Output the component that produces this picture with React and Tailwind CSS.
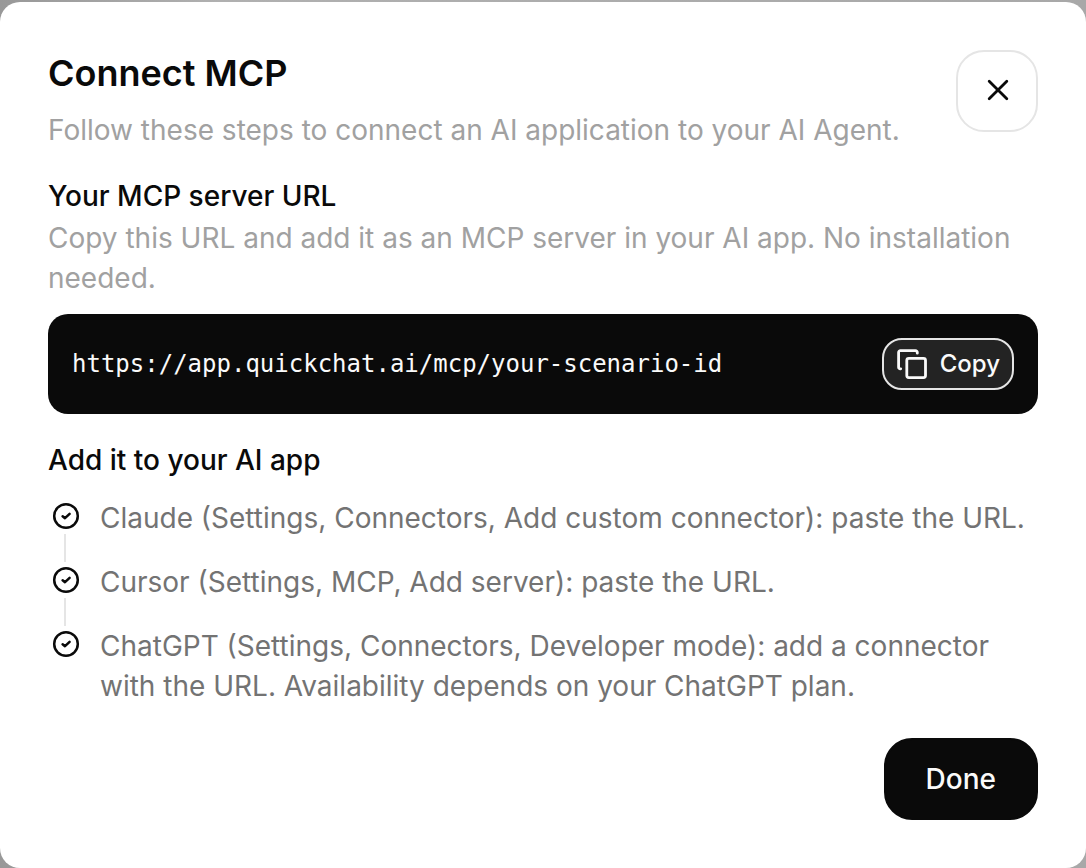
import React, { useState } from 'react';

const SERVER_URL = 'https://app.quickchat.ai/mcp/your-scenario-id';

const steps = [
  'Claude (Settings, Connectors, Add custom connector): paste the URL.',
  'Cursor (Settings, MCP, Add server): paste the URL.',
  'ChatGPT (Settings, Connectors, Developer mode): add a connector with the URL. Availability depends on your ChatGPT plan.',
];

function CloseIcon() {
  return (
    <svg width="24" height="24" viewBox="0 0 24 24" fill="none" stroke="currentColor" strokeWidth="2.8" strokeLinecap="round" aria-hidden="true">
      <path d="M4.2 2.2l17.6 17.6M21.8 2.2L4.2 19.8" />
    </svg>
  );
}

function CopyIcon() {
  return (
    <svg width="32" height="32" viewBox="0 0 32 32" fill="none" stroke="currentColor" strokeWidth="2.8" strokeLinecap="round" strokeLinejoin="round" aria-hidden="true">
      <rect x="10.8" y="10.4" width="18.7" height="19.2" rx="2" />
      <path d="M4.7 20.8H4.2A1.6 1.6 0 0 1 2.6 19.2V4.4A1.8 1.8 0 0 1 4.4 2.6H19.5A1.8 1.8 0 0 1 21.3 4.4V5.2" />
    </svg>
  );
}

function StepIcon() {
  return (
    <svg width="36" height="36" viewBox="0 0 36 36" fill="none" stroke="currentColor" strokeWidth="2.5" strokeLinecap="round" strokeLinejoin="round" aria-hidden="true">
      <circle cx="18" cy="18" r="11.8" />
      <path d="M14.6 18.2l2.4 2 4.6-4.4" />
    </svg>
  );
}

export default function App() {
  const [open, setOpen] = useState(true);

  async function copyUrl() {
    try {
      await navigator.clipboard.writeText(SERVER_URL);
    } catch (e) {
      console.error(e);
    }
  }

  return (
    <div className="min-h-screen bg-linear-to-r from-[#989898] from-0% via-[#b0b0b0] via-20% to-[#a8a8a8] pt-0.5 font-['Inter',sans-serif] text-[28px] leading-10 text-neutral-950">
      {open && (
        <div role="dialog" aria-labelledby="dialog-title" className="rounded-[20px] bg-white p-12">
          <div className="flex items-start justify-between gap-4">
            <div>
              <h1 id="dialog-title" className="text-4xl leading-[46px] font-semibold">Connect MCP</h1>
              <p className="mt-[14px] text-neutral-400">Follow these steps to connect an AI application to your AI Agent.</p>
            </div>
            <button
              type="button"
              aria-label="Close"
              onClick={() => setOpen(false)}
              className="flex size-[82px] shrink-0 items-center justify-center rounded-[28px] border-2 border-neutral-200"
            >
              <CloseIcon />
            </button>
          </div>

          <section className="mt-[26px]">
            <h2 className="font-medium">Your MCP server URL</h2>
            <p className="mt-0.5 text-neutral-400">Copy this URL and add it as an MCP server in your AI app. No installation needed.</p>
            <div className="mt-4 flex items-center justify-between gap-4 rounded-[20px] bg-neutral-950 p-6 text-neutral-50">
              <code className="font-['DejaVu_Sans_Mono',monospace] text-2xl">{SERVER_URL}</code>
              <button
                type="button"
                onClick={copyUrl}
                className="flex h-[52px] items-center gap-3 rounded-[20px] border-2 border-neutral-200 bg-[#232323] px-3 text-2xl font-medium"
              >
                <CopyIcon />
                Copy
              </button>
            </div>
          </section>

          <section className="mt-[26px]">
            <h2 className="font-medium">Add it to your AI app</h2>
            <ol className="mt-[18px]">
              {steps.map((step, i) => (
                <li key={step} className="flex gap-4">
                  <div className="flex flex-col">
                    <StepIcon />
                    {i < steps.length - 1 && <span className="ml-4 w-0.5 grow bg-neutral-200" />}
                  </div>
                  <p className={i < steps.length - 1 ? 'pb-6 text-neutral-500' : 'text-neutral-500'}>{step}</p>
                </li>
              ))}
            </ol>
          </section>

          <div className="mt-8 flex justify-end">
            <button
              type="button"
              onClick={() => setOpen(false)}
              className="h-[82px] rounded-[28px] border-2 border-neutral-950 bg-neutral-950 px-10 font-medium text-neutral-50"
            >
              Done
            </button>
          </div>
        </div>
      )}
    </div>
  );
}
